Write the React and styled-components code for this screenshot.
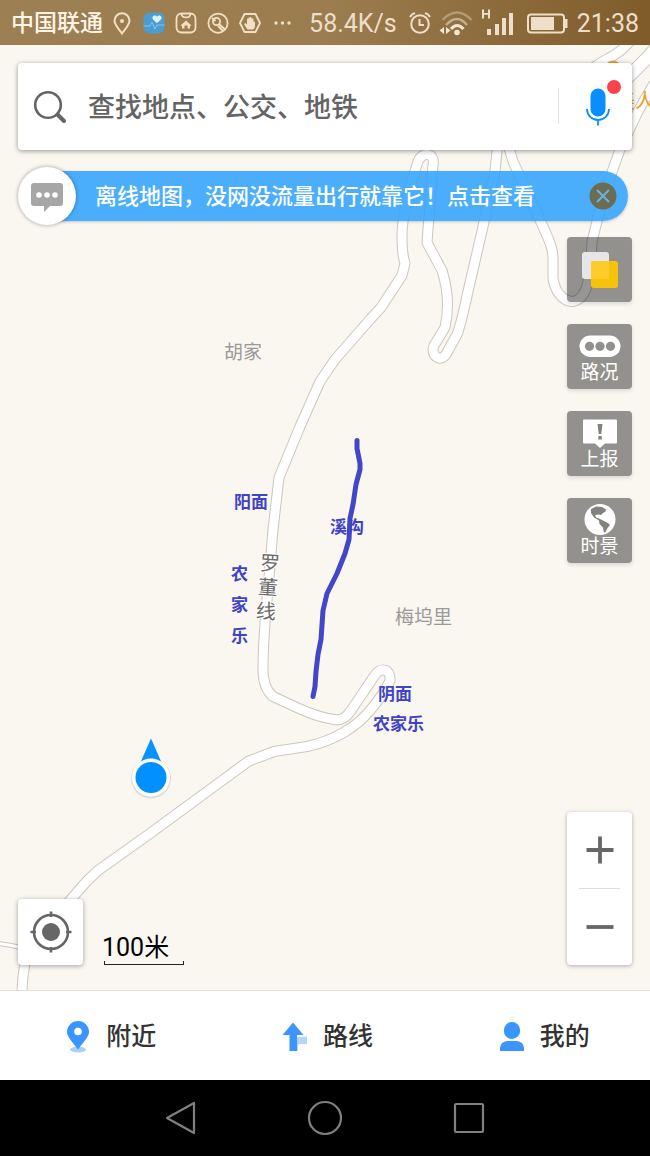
import React, { useState } from 'react';
import styled, { createGlobalStyle } from 'styled-components';

const GlobalStyle = createGlobalStyle`
    * {
        box-sizing: border-box;
    }
    body {
        margin: 0;
        font-family: Roboto, 'Noto Sans CJK SC', sans-serif;
    }
    button, input {
        margin: 0;
        padding: 0;
        border: 0;
        background: none;
        font-family: inherit;
        color: inherit;
    }
    button {
        cursor: pointer;
    }
    svg {
        display: block;
        flex: none;
    }
`;

const Screen = styled.div`
    display: flex;
    flex-direction: column;
    min-height: 100vh;
    background-color: #faf6f0;
`;

const StatusBar = styled.header`
    display: flex;
    align-items: center;
    justify-content: space-between;
    height: 45px;
    padding: 2px 11px 0;
    background: linear-gradient(100deg, #9c7f52 0%, #9b7d4f 50%, #7f5b2a 100%);
    color: #f3e6d3;
    white-space: nowrap;
`;

const Carrier = styled.span`
    margin-right: 8px;
    font-size: 23px;
    font-weight: 500;
    line-height: 32px;
    color: #fff6e8;
`;

const StatusGroup = styled.div`
    display: flex;
    align-items: center;
    gap: ${props => props.$gap};
`;

const StatusText = styled.span`
    font-size: 25px;
    line-height: 32px;
    color: #eddfca;
`;

const MapArea = styled.main`
    position: relative;
    display: flex;
    flex: 1;
    flex-direction: column;
    min-height: 800px;
    overflow: hidden;
    border-bottom: 1px solid #e3dfd9;
`;

const MapCanvas = styled.svg`
    position: absolute;
    top: 0;
    left: 0;
    width: 100%;
    height: 100%;
`;

const Casing = styled.path`
    fill: none;
    stroke: #cdc6bd;
    stroke-width: ${props => props.$width + 2};
    stroke-linejoin: round;
`;

const Road = styled.path`
    fill: none;
    stroke: #fff;
    stroke-width: ${props => props.$width};
    stroke-linejoin: round;
`;

const Place = styled.text`
    font-size: 19px;
    fill: #9b9b98;
`;

const RoadName = styled.text`
    font-size: 20px;
    fill: #6d6a67;
    stroke: #fff;
    stroke-width: 2px;
    paint-order: stroke;
`;

const Note = styled.text`
    font-size: 17px;
    font-weight: 700;
    fill: #3f43c6;
`;

const Overlay = styled.div`
    position: relative;
    display: flex;
    flex: 1;
    flex-direction: column;
    padding: 18px 18px 25px;
`;

const SearchBox = styled.form`
    display: flex;
    align-items: center;
    height: 87px;
    padding-left: 15px;
    border-radius: 4px;
    background-color: #fff;
    box-shadow: 0 1px 5px rgba(0, 0, 0, .4);
`;

const SearchInput = styled.input`
    flex: 1;
    min-width: 0;
    margin-left: 19px;
    padding-top: 2px;
    font-size: 27px;
    font-weight: 500;
    line-height: 40px;
    outline: none;
    &::placeholder {
        color: #646464;
        opacity: 1;
    }
`;

const VoiceButton = styled.button`
    position: relative;
    display: flex;
    align-items: center;
    justify-content: center;
    width: 74px;
    height: 35px;
    padding-left: 4px;
    border-left: 1px solid #e2e2e2;
`;

const RedDot = styled.span`
    position: absolute;
    top: -9px;
    right: 11px;
    width: 14px;
    height: 14px;
    border-radius: 50%;
    background-color: #fb4449;
`;

const TipRow = styled.div`
    display: flex;
    align-items: center;
    height: 58px;
    margin: 17px 4px 12px 0;
`;

const TipAvatar = styled.div`
    z-index: 1;
    display: flex;
    flex: none;
    align-items: center;
    justify-content: center;
    width: 58px;
    height: 58px;
    border-radius: 50%;
    background-color: #fff;
    box-shadow: 0 0 4px rgba(0, 0, 0, .35);
`;

const TipBar = styled.div`
    display: flex;
    flex: 1;
    align-items: center;
    justify-content: space-between;
    height: 50px;
    margin-left: -29px;
    padding: 0 11px 0 48px;
    border-radius: 0 25px 25px 0;
    background-color: rgba(47, 163, 255, .87);
    box-shadow: 0 1px 3px rgba(0, 0, 0, .2);
`;

const TipLink = styled.a`
    padding-top: 2px;
    font-size: 22px;
    font-weight: 500;
    line-height: 32px;
    white-space: nowrap;
    color: #fff;
    text-decoration: none;
`;

const Tools = styled.div`
    display: flex;
    flex-direction: column;
    align-items: flex-end;
    gap: 22px;
`;

const ToolButton = styled.button`
    display: flex;
    flex-direction: column;
    align-items: center;
    justify-content: center;
    width: 65px;
    height: 65px;
    border-radius: 4px;
    background-color: rgba(0, 0, 0, .41);
    box-shadow: 0 2px 4px rgba(0, 0, 0, .12);
    font-size: 19px;
    line-height: 24px;
    color: #fff;
`;

const BottomRow = styled.div`
    display: flex;
    align-items: flex-end;
    margin-top: auto;
`;

const LocateButton = styled.button`
    display: flex;
    align-items: center;
    justify-content: center;
    width: 65px;
    height: 66px;
    border-radius: 4px;
    background-color: #fff;
    box-shadow: 0 1px 5px rgba(0, 0, 0, .35);
`;

const Scale = styled.div`
    margin-left: 19px;
    font-size: 25px;
    line-height: 26px;
    color: #000;
`;

const ScaleLine = styled.div`
    width: 80px;
    height: 4px;
    margin-left: 2px;
    border: 1px solid #222;
    border-top: 0;
`;

const ZoomControl = styled.div`
    width: 65px;
    margin-left: auto;
    border-radius: 4px;
    background-color: #fff;
    box-shadow: 0 1px 4px rgba(0, 0, 0, .3);
`;

const ZoomButton = styled.button`
    display: flex;
    align-items: center;
    justify-content: center;
    width: 100%;
    height: 76px;
`;

const ZoomDivider = styled.div`
    height: 1px;
    margin: 0 12px;
    background-color: #dedede;
`;

const TabBar = styled.nav`
    display: grid;
    grid-template-columns: repeat(3, 1fr);
    height: 89px;
    background-color: #fff;
`;

const Tab = styled.a`
    display: flex;
    align-items: center;
    justify-content: center;
    gap: 14px;
    padding: 2px 0 0 4px;
    font-size: 25px;
    font-weight: 500;
    line-height: 36px;
    color: #333;
    text-decoration: none;
`;

const SystemBar = styled.footer`
    display: flex;
    align-items: center;
    justify-content: center;
    gap: 96px;
    height: 76px;
    background-color: #000;
`;

const SystemButton = styled.button`
    display: flex;
    align-items: center;
    justify-content: center;
    width: 48px;
    height: 48px;
`;

const mainRoad = 'M22 996 C22 975 24 962 30 950 C38 930 62 912 76 894 C84 884 90 878 98 871 L150 834 L248 762 L274 752 L307 747 C335 741 357 727 370 711 C381 698 387 688 390 681 C391 670 381 666 374 677 L351 711 C346 719 341 721 334 720 C320 718 310 714 299 709 L273 697 C266 691 263 680 263 670 C263 655 265 620 268 590 L273 530 L279 478 L300 427 L320 382 L335 360 L370 320 L381 308 L402 276 L405 264 C402 255 402 245 402 236 C402 225 404 213 408 195 L417 165 C420 151 436 152 433 166 L431 190 L427 243 L442 271 C448 290 449 310 445 328 L434 346 C430 356 441 365 447 353 L457 335 C461 325 464 310 468 292 L483 227 L495 172 L499 130';
const eastRoad = 'M506 138 L513 162 L543 227 C551 245 553 250 553 260 L553 278 C554 290 562 302 573 302 C585 300 589 285 591 262 L592 242 L603 198 L620 150 L638 112 L654 84';

const roads = [
    { d: mainRoad, width: 9 },
    { d: eastRoad, width: 9 },
    { d: 'M586 76 C596 62 612 60 624 48 L632 40', width: 9 },
    { d: 'M622 84 C630 74 642 66 658 46', width: 12 },
    { d: 'M-4 944 C6 944 14 947 30 950', width: 3 },
];

const stream = 'M357 441 L357 449 L360 464 L360 470 L356 485 L353 505 L350 519 L349 540 L345 554 L337 574 L327 594 L323 611 L321 640 L318 655 L316 672 L315 687 L313 697';

const MapView = () => (
    <MapCanvas viewBox="0 45 650 946" preserveAspectRatio="xMidYMid slice">
        {roads.map(road => <Casing key={road.d} d={road.d} $width={road.width} />)}
        {roads.map(road => <Road key={road.d} d={road.d} $width={road.width} />)}

        <circle cx="613" cy="70" r="9" fill="#f5a033" />
        <text x="615" y="108" fontSize="20" fill="#f09a1e">美人</text>

        <Place x="224" y="359">胡家</Place>
        <Place x="395" y="624">梅坞里</Place>
        <RoadName x="260" y="571" transform="rotate(4 270 563)">罗</RoadName>
        <RoadName x="258" y="595" transform="rotate(4 268 587)">董</RoadName>
        <RoadName x="256" y="619" transform="rotate(4 266 610)">线</RoadName>

        <path d={stream} fill="none" stroke="#4246c8" strokeWidth="5" strokeLinecap="round" strokeLinejoin="round" />
        <Note x="234" y="508">阳面</Note>
        <Note x="330" y="533">溪沟</Note>
        <Note x="231" y="580">农</Note>
        <Note x="231" y="611">家</Note>
        <Note x="231" y="642">乐</Note>
        <Note x="378" y="700">阴面</Note>
        <Note x="373" y="730">农家乐</Note>

        <circle cx="151" cy="779" r="20" fill="#000" opacity=".1" />
        <path d="M151 739 L162 764 H140 Z" fill="#0a92ff" />
        <circle cx="151" cy="778" r="19" fill="#fff" />
        <circle cx="151" cy="778" r="15.5" fill="#0390ff" />
    </MapCanvas>
);

const StatusIcons = () => (
    <>
        <svg width="22" height="24" viewBox="0 0 22 24" fill="none" stroke="#f3e0c4" strokeWidth="2">
            <path d="M11 21.500 C6 15 3.500 12.500 3.500 8.800 A7.500 7.500 0 0 1 18.500 8.800 C18.500 12.500 16 15 11 21.500 Z" />
            <circle cx="11" cy="9" r="2" fill="#f3e0c4" stroke="none" />
        </svg>
        <svg width="22" height="24" viewBox="0 0 22 24">
            <rect x="0.500" y="0.500" width="21" height="21" rx="6" fill="#4b9cd0" />
            <path d="M0.500 14 H7 L9 10 L12 17 L14 13 H21.500" fill="none" stroke="#86c3e6" strokeWidth="1" />
            <path d="M14 11 C10 8 9 6.500 9.500 5 C10.500 2.800 13 3 14 4.800 C15 3 17.500 2.800 18.500 5 C19 6.500 18 8 14 11 Z" fill="#dff4f6" />
        </svg>
        <svg width="22" height="24" viewBox="0 0 22 24" fill="none" stroke="#f3e0c4" strokeWidth="1.800">
            <rect x="1.500" y="1.500" width="19" height="19" rx="5" />
            <path d="M6.500 2 C7 6.500 15 6.500 15.500 2" />
            <path d="M5.500 13.500 L11 8.500 L16.500 13.500 L15 14 V16.500 H12.500 V13.500 H9.500 V16.500 H7 V14 Z" fill="#f3e0c4" stroke="none" />
        </svg>
        <svg width="22" height="24" viewBox="0 0 22 24" fill="none" stroke="#f3e0c4" strokeWidth="1.800">
            <circle cx="11" cy="11.200" r="9.600" />
            <circle cx="9.500" cy="9.500" r="3.600" />
            <path d="M12 12 L18 17.500 M11 14 L16 19" />
            <path d="M5 6 L8.500 9" />
        </svg>
        <svg width="22" height="24" viewBox="0 0 22 24" fill="none" stroke="#f3e0c4" strokeWidth="1.800">
            <path d="M5.500 2 H16.500 L21 11 L16.500 20 H5.500 L1 11 Z" strokeLinejoin="round" />
            <path d="M8 17 L5 12 L6.200 11 L8 12.500 V7 Q8.700 6 9.400 7 V5.800 Q10.200 4.800 11 5.800 V5.500 Q11.800 4.500 12.600 5.800 V6.800 Q13.500 5.800 14.500 7 V10 Q15.500 9 16 10 V14 Q16 16 14 17.500 H9 Z" fill="#f3e0c4" stroke="none" />
        </svg>
        <svg width="22" height="24" viewBox="0 0 22 24" fill="#f3e0c4">
            <circle cx="5" cy="11" r="1.700" />
            <circle cx="11.500" cy="11" r="1.700" />
            <circle cx="18" cy="11" r="1.700" />
        </svg>
    </>
);

const SignalIcons = () => (
    <>
        <svg width="26" height="24" viewBox="0 0 26 24" fill="none" stroke="#eddfca" strokeWidth="2">
            <circle cx="15" cy="12" r="8.800" />
            <path d="M14.500 7 V13 H19" />
            <path d="M5 5 Q6.500 2 10 1 M25 5 Q23.500 2 20 1" />
        </svg>
        <svg width="34" height="28" viewBox="0 0 34 28" fill="none" strokeWidth="2.500">
            <path d="M3.500 10 Q18 -5 32.500 10" stroke="#b39b76" />
            <path d="M7 15 Q18 3 28 15" stroke="#c4af8e" />
            <path d="M12 19 Q18 12 24.500 19" stroke="#f3e6d3" strokeWidth="3" />
            <circle cx="18" cy="22.500" r="2.800" fill="#f3e6d3" />
            <path d="M5 17 V24 L0.500 20.500 Z M7 17 V24 L11.500 20.500 Z" fill="#f3e6d3" />
        </svg>
        <svg width="38" height="30" viewBox="0 0 38 30" fill="#eddfca">
            <path d="M1 0.500 H3 V4 H7 V0.500 H9 V9.500 H7 V5.800 H3 V9.500 H1 Z" />
            <rect x="6" y="20" width="4" height="6" />
            <rect x="14" y="15" width="4" height="11" />
            <rect x="21" y="9" width="4" height="17" />
            <rect x="28" y="4" width="4" height="22" />
        </svg>
        <svg width="42" height="24" viewBox="0 0 42 24">
            <rect x="1" y="2.500" width="36" height="18" rx="3" fill="none" stroke="#eddfca" strokeWidth="2" />
            <rect x="4" y="5" width="23" height="13" fill="#eddfca" />
            <rect x="38" y="7" width="2.500" height="9" fill="#eddfca" />
        </svg>
    </>
);

const tools = [
    {
        label: '路况',
        icon: (
            <svg width="42" height="32" viewBox="0 0 42 32">
                <rect x="0.500" y="6.500" width="41" height="21.500" rx="10.700" fill="#fff" />
                <circle cx="10.500" cy="17.300" r="4.600" fill="#92908c" />
                <circle cx="21" cy="17.300" r="4.600" fill="#92908c" />
                <circle cx="31.500" cy="17.300" r="4.600" fill="#92908c" />
            </svg>
        ),
    },
    {
        label: '上报',
        icon: (
            <svg width="36" height="32" viewBox="0 0 36 32">
                <path d="M2 3.500 H34 Q35 3.500 35 4.500 V26 Q35 27.500 34 27.500 H23 L18 32 L13 27.500 H2 Q1 27.500 1 26 V4.500 Q1 3.500 2 3.500 Z" fill="#fff" />
                <path d="M15.500 8 H20.500 L19.300 18 H16.700 Z M16.300 20 H19.800 V23.500 H16.300 Z" fill="#84827f" />
            </svg>
        ),
    },
    {
        label: '时景',
        icon: (
            <svg width="32" height="32" viewBox="0 0 32 32">
                <circle cx="16" cy="16.500" r="15.500" fill="#fff" />
                <path d="M7 6 L12 3.500 L18 4 L22 6.500 L21.500 8.500 L19 10 L17 12 L13.500 11.500 L11 12.500 L12.500 15 L15 15.500 L19 17.500 L24 20 L26 22 L23.500 25 L21 30 L19.500 28 L19 24.500 L15.500 21 L15 17.500 L10 14.500 L7 10 Z" fill="#84827f" />
            </svg>
        ),
    },
];

const tabs = [
    {
        label: '附近',
        icon: (
            <svg width="28" height="34" viewBox="0 0 28 34">
                <ellipse cx="14" cy="29.500" rx="8" ry="3" fill="#a9cffb" />
                <path d="M14 29.500 C9 22.500 3 17 3 12 A11 11 0 0 1 25 12 C25 17 19 22.500 14 29.500 Z" fill="#3c95fc" />
                <circle cx="14" cy="11.500" r="3.800" fill="#fff" />
            </svg>
        ),
    },
    {
        label: '路线',
        icon: (
            <svg width="28" height="34" viewBox="0 0 28 34">
                <path d="M15 18 Q17 16.500 26 16.500 V24 H19 Q17 24 17 27 V31 H15 Z" fill="#b3d6fd" />
                <path d="M12 2.500 L22.500 15 H16 V31 H8.500 V15 H1.500 Z" fill="#3c95fc" />
            </svg>
        ),
    },
    {
        label: '我的',
        icon: (
            <svg width="28" height="34" viewBox="0 0 28 34">
                <ellipse cx="14" cy="10.500" rx="8.200" ry="8.500" fill="#3c95fc" />
                <path d="M2 31 V28 Q3 21 10 21 H18 Q25 21 26 28 V31 Z" fill="#3c95fc" />
            </svg>
        ),
    },
];

const App = () => {
    const [query, setQuery] = useState('');

    return (
        <Screen>
            <GlobalStyle />
            <StatusBar>
                <StatusGroup $gap="0">
                    <Carrier>中国联通</Carrier>
                    <StatusGroup $gap="10px">
                        <StatusIcons />
                    </StatusGroup>
                </StatusGroup>
                <StatusGroup $gap="8px">
                    <StatusText>58.4K/s</StatusText>
                    <SignalIcons />
                    <StatusText>21:38</StatusText>
                </StatusGroup>
            </StatusBar>

            <MapArea>
                <MapView />
                <Overlay>
                    <SearchBox onSubmit={e => e.preventDefault()}>
                        <svg width="36" height="36" viewBox="0 0 36 36" fill="none" stroke="#646464">
                            <circle cx="15" cy="16" r="12.800" strokeWidth="2.600" />
                            <path d="M24.500 25.500 L31 32" strokeWidth="4" strokeLinecap="round" />
                        </svg>
                        <SearchInput
                            aria-label="搜索"
                            placeholder="查找地点、公交、地铁"
                            value={query}
                            onChange={e => setQuery(e.target.value)}
                        />
                        <VoiceButton type="button" aria-label="语音">
                            <svg width="26" height="38" viewBox="0 0 26 38">
                                <rect x="5.500" y="0.500" width="15" height="28" rx="7.500" fill="#0a8dff" />
                                <path d="M2 21 A11 11 0 0 0 24 21 M13 32 V37.500" fill="none" stroke="#0a8dff" strokeWidth="1.800" />
                            </svg>
                            <RedDot />
                        </VoiceButton>
                    </SearchBox>

                    <TipRow>
                        <TipAvatar>
                            <svg width="34" height="32" viewBox="0 0 34 32">
                                <path d="M4 3 H30 Q33 3 33 6 V23 Q33 26 30 26 H20 L14 32 V26 H4 Q1 26 1 23 V6 Q1 3 4 3 Z" fill="#a6a6a6" />
                                <circle cx="9" cy="15" r="2.800" fill="#fff" />
                                <circle cx="17" cy="15" r="2.800" fill="#fff" />
                                <circle cx="25" cy="15" r="2.800" fill="#fff" />
                            </svg>
                        </TipAvatar>
                        <TipBar>
                            <TipLink href="#offline">离线地图，没网没流量出行就靠它！点击查看</TipLink>
                            <button type="button" aria-label="关闭">
                                <svg width="28" height="28" viewBox="0 0 28 28">
                                    <circle cx="14" cy="14" r="13.500" fill="#6b6c50" />
                                    <path d="M8 8 L20 20 M20 8 L8 20" stroke="#68b3e6" strokeWidth="2" />
                                </svg>
                            </button>
                        </TipBar>
                    </TipRow>

                    <Tools>
                        <ToolButton type="button" aria-label="图层">
                            <svg width="38" height="38" viewBox="0 0 38 38">
                                <rect x="1" y="1" width="27" height="27" rx="3" fill="#e6e6e6" />
                                <rect x="10" y="10" width="27" height="27" rx="3" fill="#f7c30a" />
                                <path d="M10 13 Q10 10 13 10 H28 V28 H10 Z" fill="#fdcb2c" />
                            </svg>
                        </ToolButton>
                        {tools.map(tool => (
                            <ToolButton key={tool.label} type="button">
                                {tool.icon}
                                {tool.label}
                            </ToolButton>
                        ))}
                    </Tools>

                    <BottomRow>
                        <LocateButton type="button" aria-label="定位">
                            <svg width="42" height="42" viewBox="0 0 42 42" fill="none" stroke="#666">
                                <circle cx="21" cy="21" r="17" strokeWidth="2.600" />
                                <circle cx="21" cy="21" r="9" fill="#666" stroke="none" />
                                <path d="M21 0.500 V6 M21 36 V41.500 M0.500 21 H6 M36 21 H41.500" strokeWidth="2.600" />
                            </svg>
                        </LocateButton>
                        <Scale>
                            100米
                            <ScaleLine />
                        </Scale>
                        <ZoomControl>
                            <ZoomButton type="button" aria-label="放大">
                                <svg width="28" height="28" viewBox="0 0 28 28">
                                    <path d="M14 0.500 V27.500 M0.500 14 H27.500" stroke="#666" strokeWidth="3.800" />
                                </svg>
                            </ZoomButton>
                            <ZoomDivider />
                            <ZoomButton type="button" aria-label="缩小">
                                <svg width="28" height="28" viewBox="0 0 28 28">
                                    <path d="M0.500 14 H27.500" stroke="#666" strokeWidth="3.800" />
                                </svg>
                            </ZoomButton>
                        </ZoomControl>
                    </BottomRow>
                </Overlay>
            </MapArea>

            <TabBar>
                {tabs.map(tab => (
                    <Tab key={tab.label} href="#tab">
                        {tab.icon}
                        {tab.label}
                    </Tab>
                ))}
            </TabBar>

            <SystemBar>
                <SystemButton type="button" aria-label="返回">
                    <svg width="36" height="36" viewBox="0 0 36 36" fill="none" stroke="#808080" strokeWidth="2.200" strokeLinejoin="round">
                        <path d="M31 3 V33 L4 18 Z" />
                    </svg>
                </SystemButton>
                <SystemButton type="button" aria-label="主页">
                    <svg width="36" height="36" viewBox="0 0 36 36" fill="none" stroke="#808080" strokeWidth="2.200">
                        <circle cx="18" cy="18" r="16" />
                    </svg>
                </SystemButton>
                <SystemButton type="button" aria-label="最近任务">
                    <svg width="36" height="36" viewBox="0 0 36 36" fill="none" stroke="#808080" strokeWidth="2.200">
                        <rect x="4" y="4" width="28" height="28" rx="1" />
                    </svg>
                </SystemButton>
            </SystemBar>
        </Screen>
    );
};

export default App;
